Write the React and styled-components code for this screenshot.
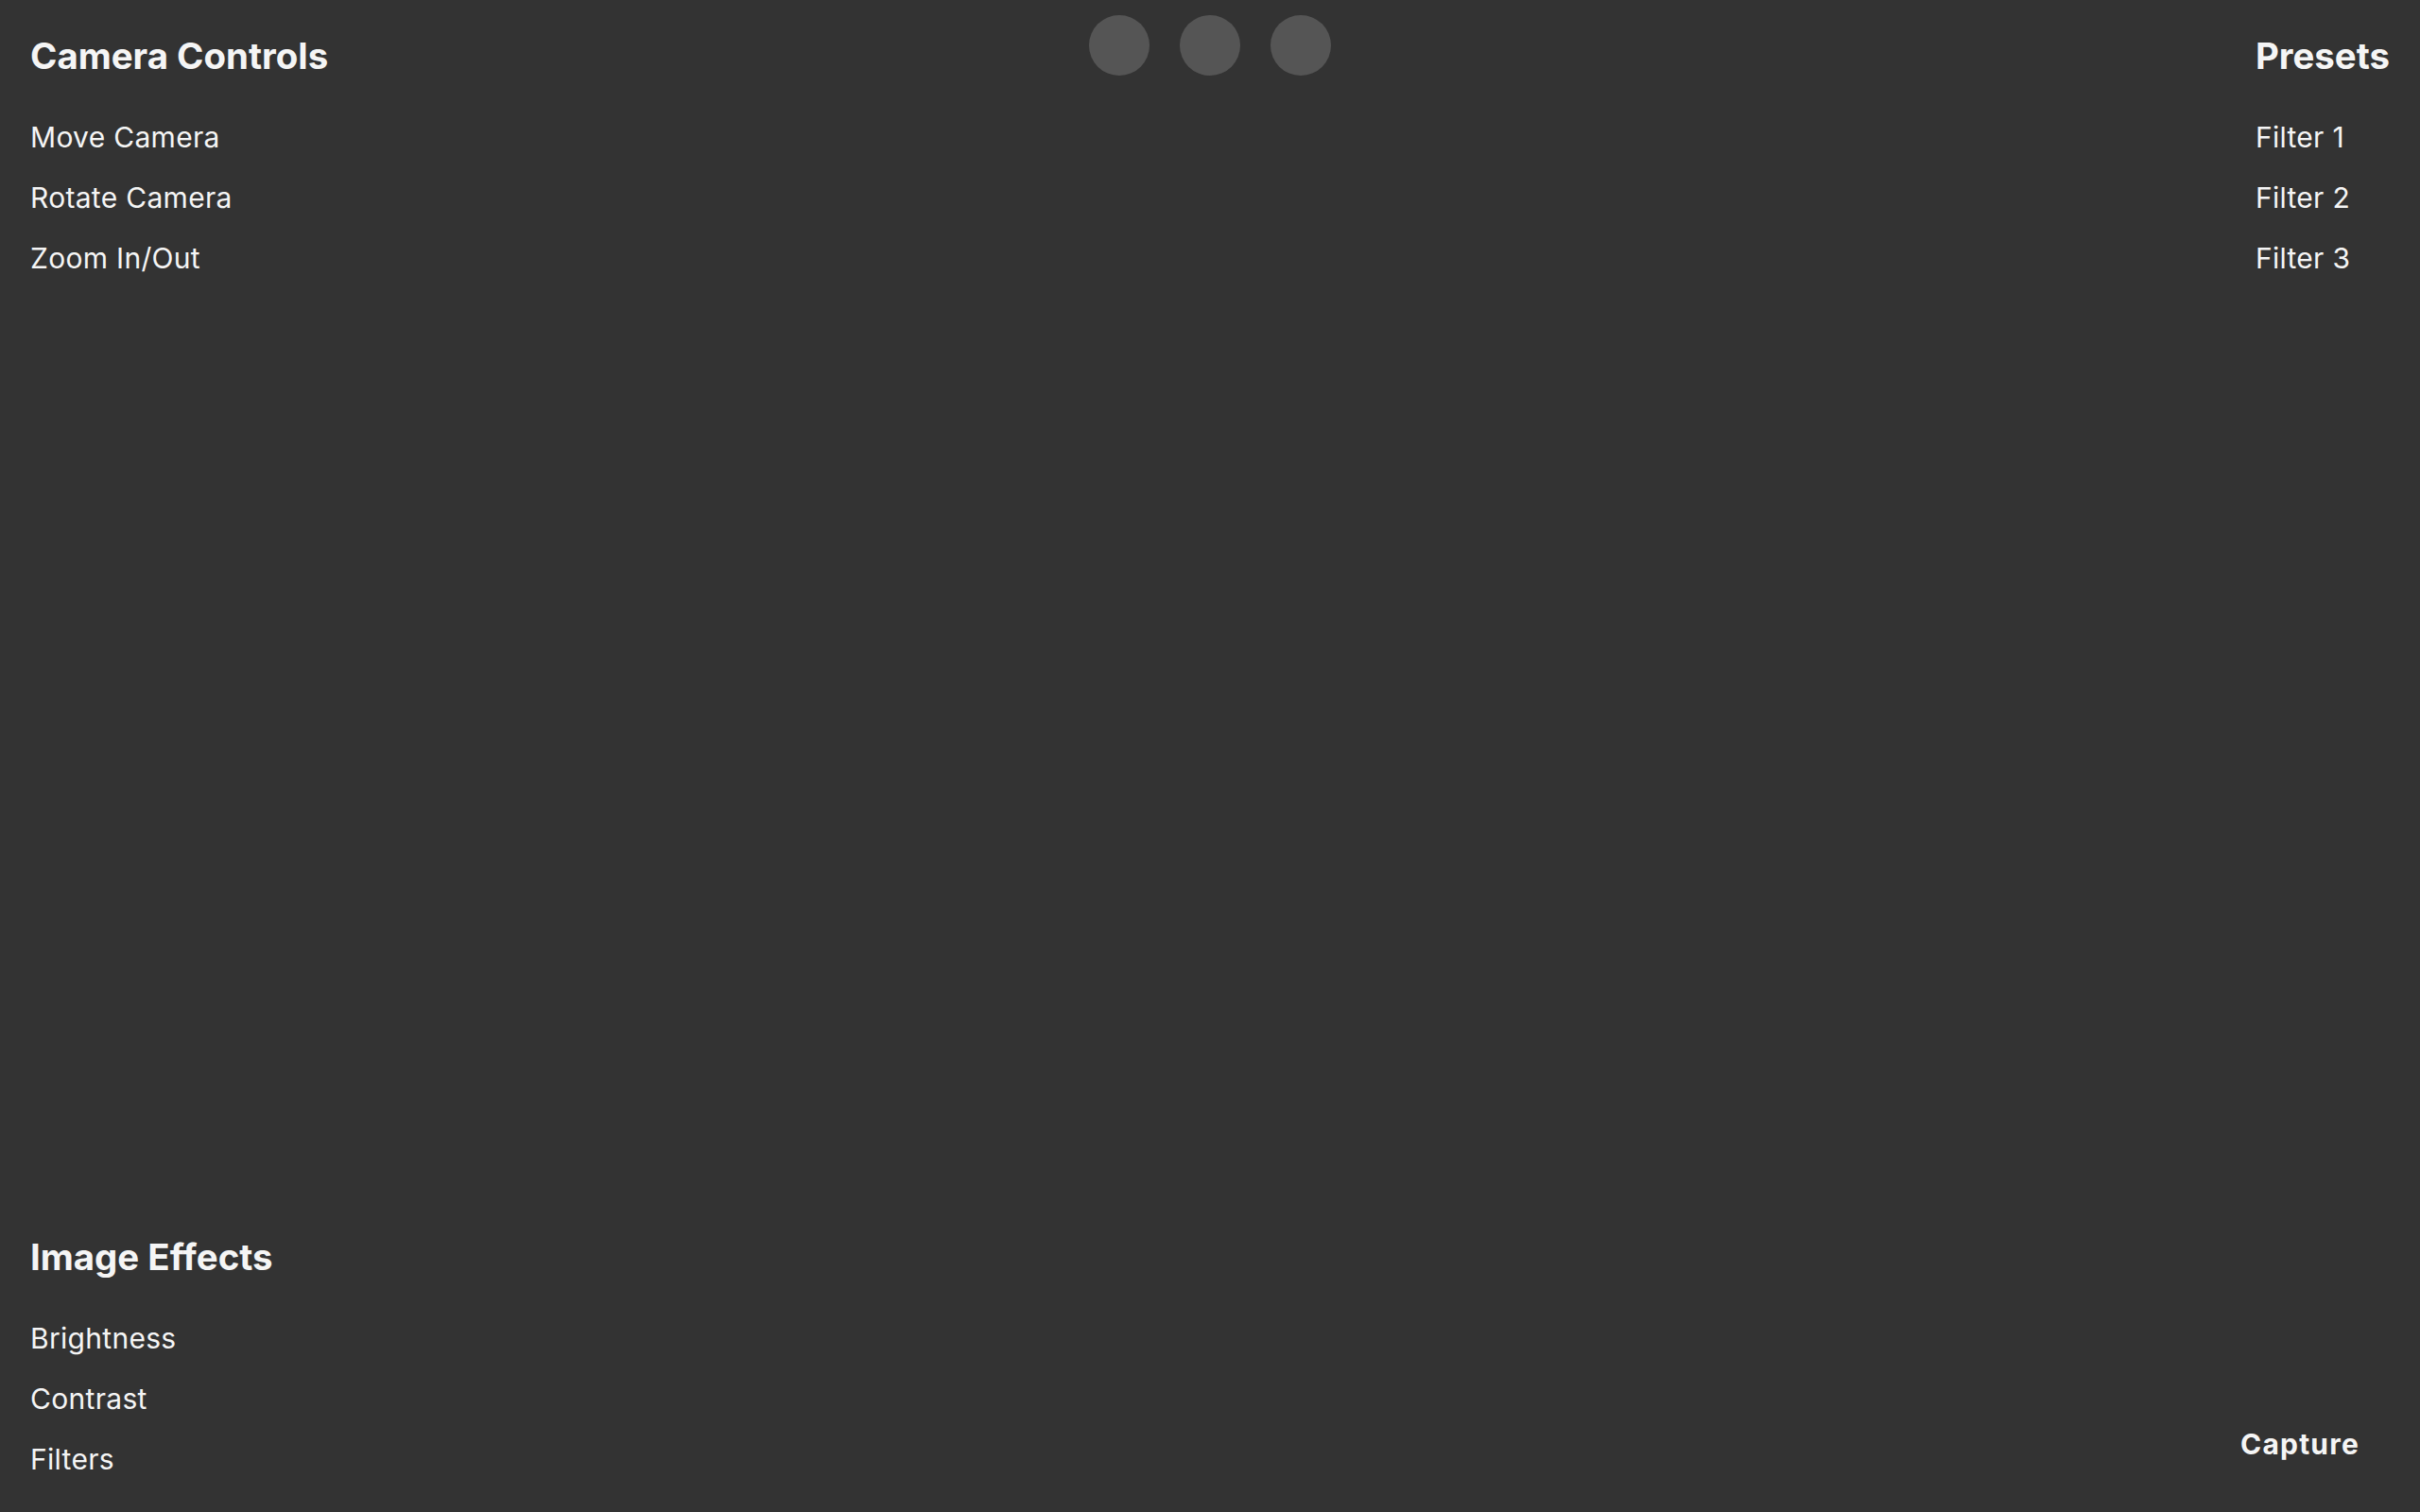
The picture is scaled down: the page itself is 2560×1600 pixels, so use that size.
import React from "react";
import styled, { createGlobalStyle } from "styled-components";

// Global page reset
const GlobalStyle = createGlobalStyle`
  html, body {
    margin: 0;
    padding: 0;
    background: #333333;
  }
  body {
    font-family: Inter, "Noto Sans", "Liberation Sans", sans-serif;
    color: #f5f5f5;
  }
  * {
    box-sizing: border-box;
  }
`;

// Layout
const Page = styled.div`
  height: 100vh;
  display: grid;
  grid-template-columns: 1fr auto 1fr;
  grid-template-rows: auto 1fr auto;
  padding: 16px 32px 24px;
  background: #333333;
`;

const Panel = styled.section`
  grid-column: ${(p) => p.$col};
  grid-row: ${(p) => p.$row};
  justify-self: ${(p) => (p.$align === "end" ? "end" : "start")};
  align-self: ${(p) => (p.$row === 3 ? "end" : "start")};
  padding-top: ${(p) => (p.$row === 1 ? "20px" : "0")};
`;

const Heading = styled.h2`
  margin: 0 0 31px;
  font-size: 38.4px;
  line-height: 46px;
  font-weight: 700;
  color: #f5f5f5;
`;

const List = styled.ul`
  list-style: none;
  margin: 0;
  padding: 0;
`;

const Item = styled.li`
  font-size: 30px;
  line-height: 64px;
  letter-spacing: 0.3px;
  font-weight: 400;
  color: #f5f5f5;
  cursor: pointer;
`;

// Top centre dots
const DotBar = styled.div`
  grid-column: 2;
  grid-row: 1;
  display: flex;
  gap: 32px;
  align-self: start;
`;

const Dot = styled.button`
  width: 64px;
  height: 64px;
  border-radius: 50%;
  border: none;
  padding: 0;
  background: #555555;
  cursor: pointer;
`;

const CaptureButton = styled.button`
  grid-column: 3;
  grid-row: 3;
  justify-self: end;
  align-self: end;
  margin-bottom: 14px;
  padding: 16px 32px;
  border: none;
  background: transparent;
  font-family: Inter, "Noto Sans", "Liberation Sans", sans-serif;
  font-size: 30px;
  letter-spacing: 1.2px;
  font-weight: 700;
  color: #f5f5f5;
  cursor: pointer;
`;

const cameraControls = ["Move Camera", "Rotate Camera", "Zoom In/Out"];
const presets = ["Filter 1", "Filter 2", "Filter 3"];
const imageEffects = ["Brightness", "Contrast", "Filters"];

function ControlPanel({ title, items, col, row, align }) {
  return (
    <Panel $col={col} $row={row} $align={align}>
      <Heading>{title}</Heading>
      <List>
        {items.map((item) => (
          <Item key={item}>{item}</Item>
        ))}
      </List>
    </Panel>
  );
}

function App() {
  return (
    <>
      <GlobalStyle />
      <Page>
        <ControlPanel title="Camera Controls" items={cameraControls} col={1} row={1} />
        <DotBar>
          <Dot aria-label="mode 1" />
          <Dot aria-label="mode 2" />
          <Dot aria-label="mode 3" />
        </DotBar>
        <ControlPanel title="Presets" items={presets} col={3} row={1} align="end" />
        <ControlPanel title="Image Effects" items={imageEffects} col={1} row={3} />
        <CaptureButton>Capture</CaptureButton>
      </Page>
    </>
  );
}

export default App;
